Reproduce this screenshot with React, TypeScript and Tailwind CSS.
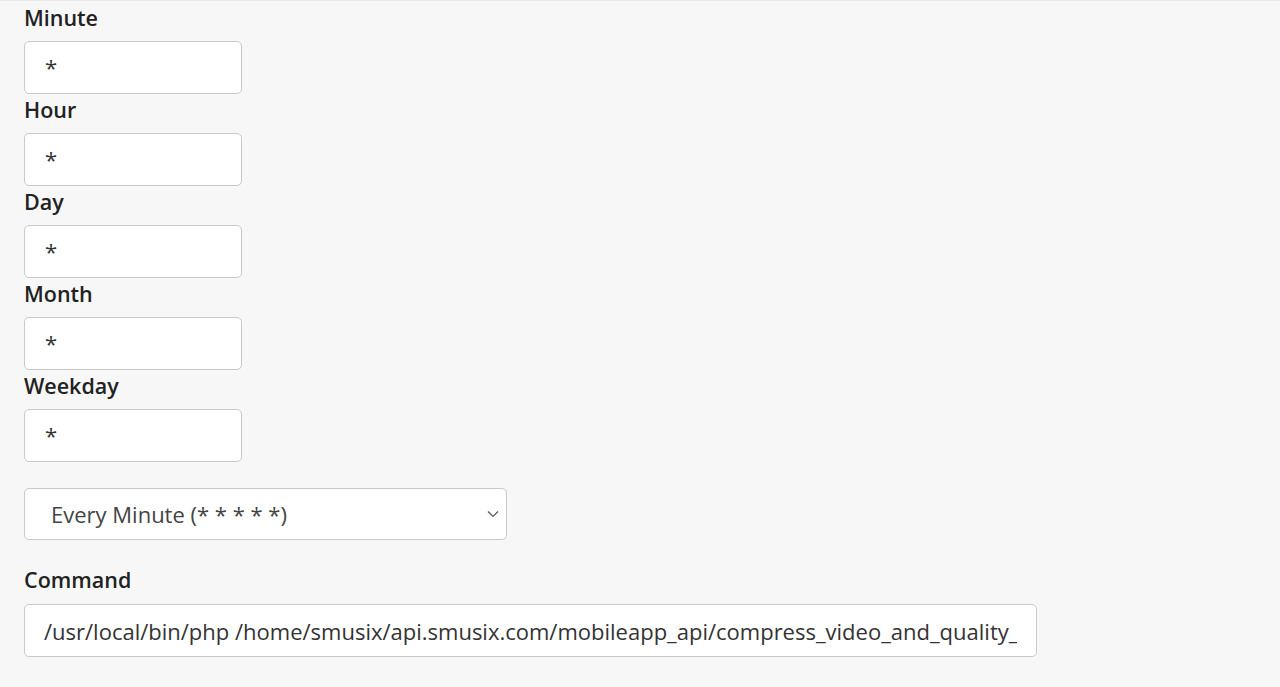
import React from "react";

const fields = ["Minute", "Hour", "Day", "Month", "Weekday"];

const Field = ({ label }: { label: string }) => (
  <div className="flex flex-col">
    <label className="h-[39px] leading-[31px] text-[21.5px] font-semibold text-[#222]">{label}</label>
    <input
      readOnly
      value="*"
      className="w-[218px] h-[53px] px-[20px] pb-[2px] bg-white border border-[#c9c9c9] rounded-[5px] text-[22px] text-[#333] outline-none"
    />
  </div>
);

export default function App() {
  return (
    <div
      className="min-h-[687px] w-full bg-[#f7f7f7] border-t border-[#ebebeb] px-[24px]"
      style={{ fontFamily: '"Open Sans", "Liberation Sans", sans-serif' }}
    >
      <div className="flex flex-col mt-[1px]">
        {fields.map((f) => (
          <Field key={f} label={f} />
        ))}
      </div>

      <div className="mt-[26px] relative w-[483px]">
        <select
          className="appearance-none w-full h-[52px] pl-[26px] pr-10 bg-white border border-[#c9c9c9] rounded-[5px] text-[22px] text-[#444] outline-none"
          defaultValue="every"
        >
          <option value="every">Every Minute (* * * * *)</option>
        </select>
        <svg
          className="absolute right-[8px] top-1/2 -translate-y-1/2 pointer-events-none"
          width="12"
          height="8"
          viewBox="0 0 12 8"
          fill="none"
          stroke="#555"
          strokeWidth="1.2"
        >
          <polyline points="1,1.5 6,6.5 11,1.5" />
        </svg>
      </div>

      <div className="mt-[27px] flex flex-col">
        <label className="h-[37px] leading-[26px] text-[21.5px] font-semibold text-[#222]">Command</label>
        <input
          readOnly
          value="/usr/local/bin/php /home/smusix/api.smusix.com/mobileapp_api/compress_video_and_quality_"
          className="w-[1013px] h-[53px] pl-[19px] pr-[19px] bg-white border border-[#c9c9c9] rounded-[5px] text-[22px] text-[#333] outline-none"
        />
      </div>
    </div>
  );
}
